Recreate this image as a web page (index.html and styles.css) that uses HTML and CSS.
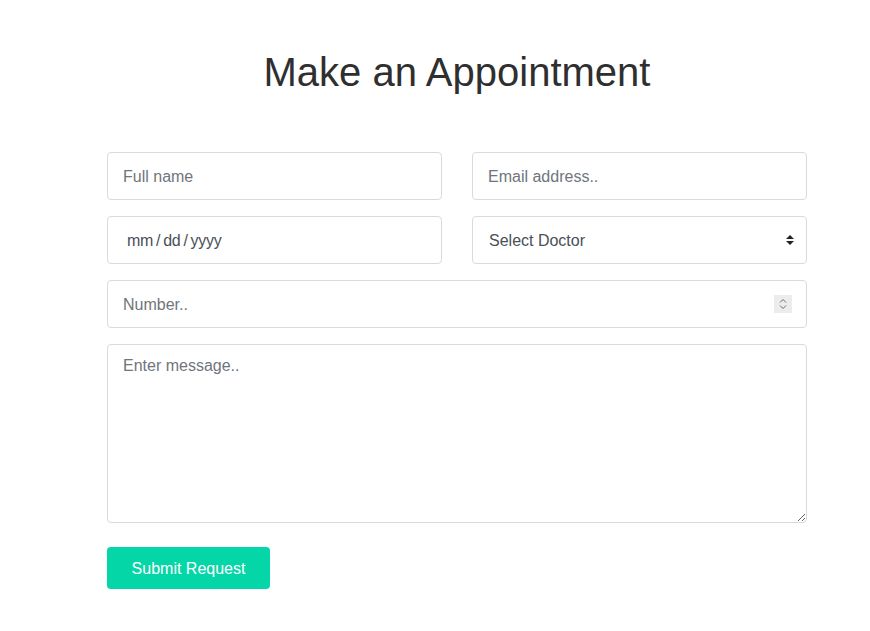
FILE: index.html
```
<!DOCTYPE html>
<html lang="en">
<head>
    <meta charset="UTF-8">
    <meta name="viewport" content="width=device-width, initial-scale=1.0">
    <title>Make an Appointment</title>
    <link rel="stylesheet" href="styles.css">
</head>
<body>
    <div class="appointment">
        <h1>Make an Appointment</h1>
        <form class="appointment-form">
            <div class="row">
                <input type="text" class="field" placeholder="Full name">
                <input type="email" class="field" placeholder="Email address..">
            </div>
            <div class="row">
                <input type="date" class="field field-date">
                <select class="field field-select">
                    <option>Select Doctor</option>
                    <option>Dr. Smith</option>
                    <option>Dr. Jones</option>
                </select>
            </div>
            <div class="number-wrap">
                <input type="number" class="field" placeholder="Number..">
                <span class="spinner">
                    <svg width="12" height="14" viewBox="0 0 12 14">
                        <path d="M3 5.5 L6 2.5 L9 5.5 M3 8.5 L6 11.5 L9 8.5" fill="none" stroke="#6b6b6b" stroke-width="1"/>
                    </svg>
                </span>
            </div>
            <textarea class="field field-message" placeholder="Enter message.."></textarea>
            <button type="button" class="submit-btn">Submit Request</button>
        </form>
    </div>
</body>
</html>
```

FILE: styles.css
```
body {
    font-family: "Liberation Sans", Arial, sans-serif;
    background-color: #fff;
    color: #333;
    margin: 0;
}

.appointment {
    width: 700px;
    margin-left: 107px;
    padding-top: 48px;
}

h1 {
    text-align: center;
    font-size: 40px;
    font-weight: normal;
    line-height: 48px;
    color: #2f2f2f;
    margin: 0 0 56px;
}

.appointment-form {
    display: flex;
    flex-direction: column;
    gap: 16px;
}

.row {
    display: grid;
    grid-template-columns: 1fr 1fr;
    gap: 30px;
}

.field {
    box-sizing: border-box;
    width: 100%;
    height: 48px;
    padding: 1px 15px 0;
    border: 1px solid #dadada;
    border-radius: 4px;
    background: #fff;
    font-family: inherit;
    font-size: 16px;
    color: #495057;
    outline: none;
}

.field::placeholder {
    color: #6f757b;
}

.field-date {
    padding-left: 18px;
    letter-spacing: -0.3px;
}

.field-date::-webkit-datetime-edit-text {
    padding: 0 2px;
}

.field-date::-webkit-calendar-picker-indicator {
    display: none;
}

.field-select {
    appearance: none;
    -webkit-appearance: none;
    padding-left: 16px;
    background-image: url("data:image/svg+xml;utf8,<svg xmlns='http://www.w3.org/2000/svg' width='8' height='10' viewBox='0 0 8 10'><path d='M0 4 L4 0 L8 4 Z M0 6 L4 10 L8 6 Z' fill='%23222'/></svg>");
    background-repeat: no-repeat;
    background-position: right 12px center;
}

.number-wrap {
    position: relative;
}

.number-wrap input::-webkit-inner-spin-button,
.number-wrap input::-webkit-outer-spin-button {
    -webkit-appearance: none;
    margin: 0;
}

.spinner {
    position: absolute;
    right: 15px;
    top: 15px;
    width: 18px;
    height: 18px;
    background: #ececec;
    display: flex;
    align-items: center;
    justify-content: center;
}

.field-message {
    height: 179px;
    padding-top: 11px;
    resize: vertical;
    line-height: 1.25;
}

.submit-btn {
    align-self: flex-start;
    margin-top: 8px;
    width: 163px;
    height: 42px;
    padding-top: 2px;
    background-color: #05d6a7;
    color: #fff;
    border: none;
    border-radius: 4px;
    font-family: inherit;
    font-size: 16px;
    cursor: pointer;
}
```
